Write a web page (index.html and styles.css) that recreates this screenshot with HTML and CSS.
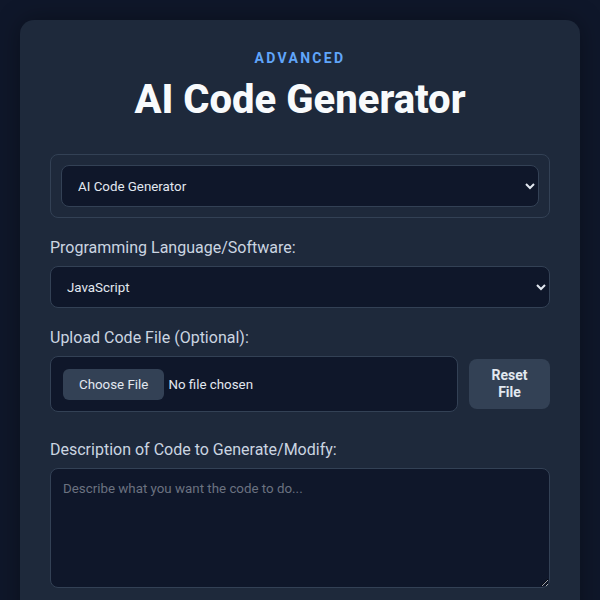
FILE: index.html
```html
<!DOCTYPE html>
<html lang="en">
<head>
<meta charset="utf-8">
<title>AI Code Generator</title>
<link rel="stylesheet" href="styles.css">
</head>
<body>
<main class="card">
  <header class="head">
    <div class="eyebrow">ADVANCED</div>
    <h1 class="title">AI Code Generator</h1>
  </header>
  <div class="tool-box">
    <select class="field select">
      <option>AI Code Generator</option>
    </select>
  </div>
  <div class="group">
    <label class="label">Programming Language/Software:</label>
    <select class="field select">
      <option>JavaScript</option>
    </select>
  </div>
  <div class="group">
    <label class="label">Upload Code File (Optional):</label>
    <div class="file-row">
      <input type="file" class="field file">
      <button class="reset">Reset File</button>
    </div>
  </div>
  <div class="group group-last">
    <label class="label">Description of Code to Generate/Modify:</label>
    <textarea class="field area" placeholder="Describe what you want the code to do..."></textarea>
  </div>
</main>
</body>
</html>
```

FILE: styles.css
```css
* { box-sizing: border-box; }
html, body { margin: 0; padding: 0; }
body {
  background: #0f172a;
  font-family: Roboto, "Liberation Sans", sans-serif;
  color: #e2e8f0;
  padding: 20px;
  color-scheme: dark;
}
.card {
  background: #1e293b;
  border-radius: 14px;
  padding: 30px 30px 40px;
  box-shadow: 0 0 24px rgba(0,0,0,0.35);
  min-height: 700px;
}
.head { text-align: center; }
.eyebrow {
  color: #60a5fa;
  font-size: 14px;
  font-weight: 700;
  letter-spacing: 2.3px;
  line-height: 16px;
}
.title {
  margin: 10px 0 0;
  font-size: 40px;
  font-weight: 800;
  color: #f8fafc;
  line-height: 48px;
}
.tool-box {
  margin-top: 30px;
  padding: 10px;
  border: 1px solid #334155;
  border-radius: 8px;
  background: #1e293b;
}
.field {
  display: block;
  width: 100%;
  background: #0f172a;
  color: #e2e8f0;
  border: 1px solid #334155;
  border-radius: 8px;
  font-family: Roboto, "Liberation Sans", sans-serif;
  font-size: 13.333px;
}
.select {
  height: 42px;
  padding: 0 12px;
}
.group { margin-top: 20px; }
.group-last { margin-top: 28px; }
.label {
  display: block;
  font-size: 16px;
  color: #cbd5e1;
  margin-bottom: 8px;
  line-height: 20px;
}
.file-row {
  display: flex;
  align-items: center;
  gap: 11px;
}
.file {
  flex: 1;
  height: 56px;
  padding: 12px;
}
.file::file-selector-button {
  background: #334155;
  color: #e2e8f0;
  border: none;
  border-radius: 6px;
  padding: 0 16px;
  height: 31px;
  font-family: Roboto, "Liberation Sans", sans-serif;
  font-size: 13.333px;
  margin-right: 4px;
}
.reset {
  width: 81px;
  height: 50px;
  background: #334155;
  color: #e2e8f0;
  border: none;
  border-radius: 8px;
  font-family: Roboto, "Liberation Sans", sans-serif;
  font-size: 14px;
  font-weight: 700;
  line-height: 17px;
  padding: 0 12px;
}
.area {
  height: 120px;
  padding: 12px;
  resize: vertical;
}
.area::placeholder { color: #6b7280; }
```
